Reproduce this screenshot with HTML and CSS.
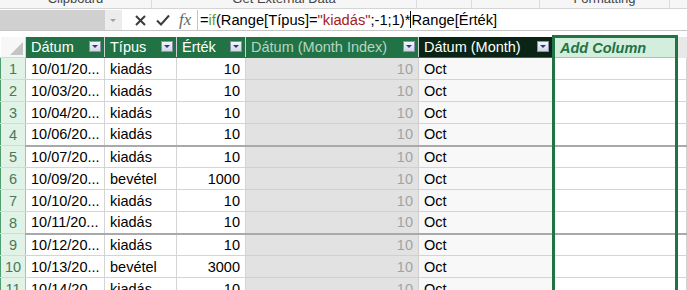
FILE: index.html
```html
<!DOCTYPE html>
<html lang="hu">
<head>
  <meta charset="UTF-8">
  <title>Range</title>
  <link rel="stylesheet" href="styles.css">
</head>
<body>
  <div class="ribbon">
    <div class="group g-clip"><span>Clipboard</span></div>
    <div class="group g-ext"><span>Get External Data</span></div>
    <div class="group g-a"></div>
    <div class="group g-b"></div>
    <div class="group g-fmt"><span>Formatting</span></div>
    <div class="group g-end"></div>
  </div>

  <div class="formula-bar">
    <div class="name-box"></div>
    <div class="name-drop"><span class="arrow"></span></div>
    <div class="fb-buttons">
      <svg class="ico-x" width="11" height="11" viewBox="0 0 11 11"><path d="M1 1 L10 10 M10 1 L1 10" stroke="#3c3c3c" stroke-width="2"/></svg>
      <svg class="ico-ok" width="14" height="12" viewBox="0 0 14 12"><path d="M1 6.5 L5 10.5 L13 1.5" fill="none" stroke="#3c3c3c" stroke-width="2"/></svg>
      <span class="fx">fx</span>
    </div>
    <div class="formula">=<span class="fn">if</span>(Range[Típus]=<span class="str">"kiadás"</span>;-1;1)*<span class="caret"></span>Range[Érték]</div>
  </div>

  <div class="gap"></div>

  <table class="grid">
    <colgroup>
      <col class="c-row">
      <col class="c-date">
      <col class="c-type">
      <col class="c-val">
      <col class="c-idx">
      <col class="c-month">
      <col class="c-add">
      <col>
    </colgroup>
    <thead>
      <tr>
        <th class="corner"><span class="tri"></span></th>
        <th><div class="hd"><span>Dátum</span><span class="dd"></span></div></th>
        <th><div class="hd"><span>Típus</span><span class="dd"></span></div></th>
        <th><div class="hd"><span>Érték</span><span class="dd"></span></div></th>
        <th class="calc"><div class="hd"><span>Dátum (Month Index)</span><span class="dd"></span></div></th>
        <th class="sel"><div class="hd"><span>Dátum (Month)</span><span class="dd"></span></div></th>
        <th class="add">Add Column</th>
        <th class="rest"></th>
      </tr>
    </thead>
    <tbody>
      <tr><td class="rn">1</td><td>10/01/20...</td><td>kiadás</td><td class="num">10</td><td class="idx">10</td><td class="mon">Oct</td><td class="addc"></td><td></td></tr>
      <tr><td class="rn">2</td><td>10/03/20...</td><td>kiadás</td><td class="num">10</td><td class="idx">10</td><td class="mon">Oct</td><td class="addc"></td><td></td></tr>
      <tr><td class="rn">3</td><td>10/04/20...</td><td>kiadás</td><td class="num">10</td><td class="idx">10</td><td class="mon">Oct</td><td class="addc"></td><td></td></tr>
      <tr class="group-end"><td class="rn">4</td><td>10/06/20...</td><td>kiadás</td><td class="num">10</td><td class="idx">10</td><td class="mon">Oct</td><td class="addc"></td><td></td></tr>
      <tr><td class="rn">5</td><td>10/07/20...</td><td>kiadás</td><td class="num">10</td><td class="idx">10</td><td class="mon">Oct</td><td class="addc"></td><td></td></tr>
      <tr><td class="rn">6</td><td>10/09/20...</td><td>bevétel</td><td class="num">1000</td><td class="idx">10</td><td class="mon">Oct</td><td class="addc"></td><td></td></tr>
      <tr><td class="rn">7</td><td>10/10/20...</td><td>kiadás</td><td class="num">10</td><td class="idx">10</td><td class="mon">Oct</td><td class="addc"></td><td></td></tr>
      <tr class="group-end"><td class="rn">8</td><td>10/11/20...</td><td>kiadás</td><td class="num">10</td><td class="idx">10</td><td class="mon">Oct</td><td class="addc"></td><td></td></tr>
      <tr><td class="rn">9</td><td>10/12/20...</td><td>kiadás</td><td class="num">10</td><td class="idx">10</td><td class="mon">Oct</td><td class="addc"></td><td></td></tr>
      <tr><td class="rn">10</td><td>10/13/20...</td><td>bevétel</td><td class="num">3000</td><td class="idx">10</td><td class="mon">Oct</td><td class="addc"></td><td></td></tr>
      <tr><td class="rn">11</td><td>10/14/20...</td><td>kiadás</td><td class="num">10</td><td class="idx">10</td><td class="mon">Oct</td><td class="addc"></td><td></td></tr>
    </tbody>
  </table>
</body>
</html>
```

FILE: styles.css
```css
html, body {
  margin: 0;
  height: 290px;
  overflow: hidden;
  background: #ffffff;
  font-family: "Liberation Sans", Arial, sans-serif;
}

/* ribbon, only its bottom edge shows */
.ribbon {
  display: flex;
  height: 8px;
  overflow: hidden;
  background: #f6f6f6;
  border-bottom: 1px solid #d4d4d4;
}
.group {
  border-right: 1px solid #dcdcdc;
  text-align: center;
  font-size: 13px;
  line-height: 13px;
  color: #444;
}
.group span {
  display: block;
  margin-top: -8px;
}
.g-clip { width: 151px; }
.g-ext { width: 264px; }
.g-a { width: 54px; }
.g-b { width: 67px; }
.g-fmt { width: 129px; }
.g-end { flex: 1; border-right: none; }

/* formula bar */
.formula-bar {
  display: flex;
  height: 20px;
  margin-top: 1px;
  border-bottom: 1px solid #c6c6c6;
}
.name-box {
  width: 105px;
  background: #d0d0d0;
}
.name-drop {
  width: 17px;
  background: #ececec;
  display: flex;
  align-items: center;
  justify-content: center;
}
.arrow {
  border-left: 3px solid transparent;
  border-right: 3px solid transparent;
  border-top: 3px solid #a0a0a0;
  margin-right: 1px;
}
.fb-buttons {
  width: 75px;
  display: flex;
  align-items: center;
  border-right: 1px solid #c6c6c6;
}
.ico-x { margin-left: 13px; }
.ico-ok { margin-left: 10px; }
.fx {
  margin-left: 9px;
  font-family: "Liberation Serif", "Times New Roman", serif;
  font-style: italic;
  font-size: 17px;
  color: #666;
  line-height: 20px;
}
.formula {
  padding-left: 2px;
  font-size: 14.7px;
  line-height: 20px;
  color: #000;
  white-space: nowrap;
}
.fn { color: #6e9a12; }
.str { color: #a81818; }
.caret {
  display: inline-block;
  width: 0;
  height: 17px;
  border-left: 1px solid #000;
  vertical-align: -3px;
}

.gap { height: 4px; }

/* grid */
.grid {
  width: 687px;
  table-layout: fixed;
  border-collapse: collapse;
  font-size: 14.5px;
}
.c-row { width: 25px; }
.c-date { width: 79px; }
.c-type { width: 72px; }
.c-val { width: 69px; }
.c-idx { width: 173px; }
.c-month { width: 135px; }
.c-add { width: 123px; }

.grid th {
  height: 21px;
  padding: 0 3px 0 5px;
  background: #217346;
  color: #ffffff;
  font-weight: normal;
  text-align: left;
  white-space: nowrap;
  border-right: 1px solid #c9d3cd;
  border-bottom: 1px solid #217346;
  box-sizing: border-box;
}
.hd {
  display: flex;
  align-items: center;
  justify-content: space-between;
}
.dd {
  width: 12px;
  height: 11px;
  box-sizing: border-box;
  border: 1px solid #8a90b0;
  background: linear-gradient(#f5f6fb, #d3d7e7);
  display: flex;
  align-items: center;
  justify-content: center;
}
.dd::after {
  content: "";
  border-left: 3px solid transparent;
  border-right: 3px solid transparent;
  border-top: 3px solid #2e3a78;
}
.grid th.corner {
  background: #f7f7f7;
  border-right: 1px solid #d6d6d6;
  border-bottom: 1px solid #d6d6d6;
  padding: 0;
  position: relative;
}
.tri {
  position: absolute;
  right: 2px;
  bottom: 2px;
  border-left: 13px solid transparent;
  border-bottom: 13px solid #c4c4c4;
}
.grid th.calc { color: #b9d3c3; }
.grid th.sel { background: #0a2516; }
.grid th.add {
  background: #d3eedd;
  color: #217346;
  font-weight: bold;
  font-style: italic;
  border: 3px solid #217346;
  border-bottom: 1px solid #8fd3a8;
}
.grid th.rest {
  background: #e8e8e8;
  border-right: none;
  border-bottom: 1px solid #e8e8e8;
}

.grid td {
  height: 22px;
  padding: 0 5px 0 5px;
  border-right: 1px solid #d4d4d4;
  border-bottom: 1px solid #d4d4d4;
  white-space: nowrap;
  overflow: hidden;
  color: #000;
  box-sizing: border-box;
}
.grid td.rn {
  padding: 0;
  text-align: center;
  background: #e1f2e7;
  color: #467a5a;
  border-left: 1px solid #4f9c6e;
  border-right: 1px solid #8ecfa8;
  border-bottom: 1px solid #c3e4cf;
}
.grid td.num { text-align: right; }
.grid td.idx {
  text-align: right;
  background: #e2e2e2;
  color: #a2a2a2;
  border-right-color: #d0d0d0;
  border-bottom-color: #d0d0d0;
}
.grid td.mon { background: #f8f8f8; }
.grid td.addc {
  background: #ffffff;
  border-left: 3px solid #217346;
  border-right: 3px solid #217346;
}
.grid tr.group-end td {
  border-bottom: 2px solid #a9a9a9;
}
.grid tr.group-end td.rn {
  border-bottom: 1px solid #c3e4cf;
}
```
